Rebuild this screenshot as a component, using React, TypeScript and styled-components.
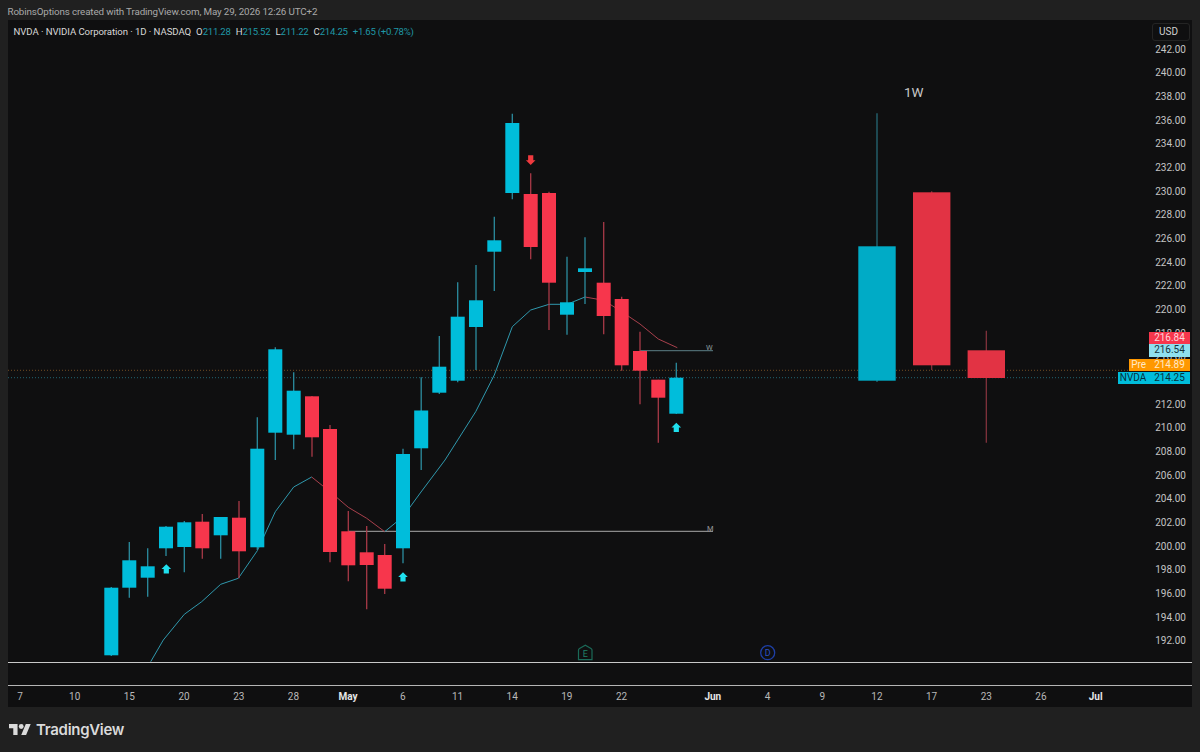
import React from "react"
import styled, { createGlobalStyle } from "styled-components"

const UP = "#00bddb"
const DOWN = "#f7364c"
const FONT = `Roboto, "Liberation Sans", Arial, sans-serif`

const GlobalStyle = createGlobalStyle`
  html, body {
    background: #202020;
    height: 752px;
    margin: 0;
    overflow: hidden;
  }
`
const Page = styled.div`
  display: flex;
  flex-direction: column;
  font-family: ${FONT};
  height: 752px;
  padding: 0 8px;
  width: 1184px;
`
const Caption = styled.div`
  color: #a9a9a9;
  font-size: 9.8px;
  height: 20px;
  letter-spacing: -0.13px;
  line-height: 24px;
  margin-left: -0.5px;
  white-space: nowrap;
`
const Panel = styled.div`
  background: #0f0f10;
  display: flex;
  flex-direction: column;
  height: 687px;
  overflow: hidden;
  position: relative;
`
const Plot = styled.div`
  display: flex;
  height: 642px;
`
const Canvas = styled.svg`
  display: block;
  flex: none;
  height: 642px;
  width: 1142px;
`
const PriceAxis = styled.div`
  box-sizing: border-box;
  color: #c4c4c4;
  font-size: 10px;
  padding: 17.6px 6px 0 0;
  text-align: right;
  width: 42px;
`
const PriceTick = styled.div`
  height: 23.68px;
  line-height: 23.68px;
`
const CurrencyBox = styled.div`
  border: 1px solid #242424;
  border-radius: 3px;
  box-sizing: border-box;
  color: #cfcfcf;
  font-size: 10px;
  height: 18px;
  line-height: 16px;
  padding-left: 6px;
  position: absolute;
  right: 2px;
  top: 3px;
  width: 38px;
`
const Legend = styled.div`
  color: #d8d8d8;
  display: flex;
  font-size: 9.6px;
  left: 5.5px;
  letter-spacing: -0.07px;
  line-height: 12px;
  position: absolute;
  top: 6px;
  white-space: nowrap;
`
const LegendItem = styled.span`
  margin-left: 5px;
`
const LegendValue = styled.span`
  color: #1f97a6;
  letter-spacing: -0.25px;
`
const FrameLabel = styled.div`
  color: #c8c8c8;
  font-size: 13.5px;
  left: 896px;
  position: absolute;
  top: 64px;
`
const TagStack = styled.div`
  display: flex;
  flex-direction: column;
  font-size: 10px;
  position: absolute;
  right: 2px;
  top: 312px;
`
const TagRow = styled.div<{ $gap?: number }>`
  display: flex;
  justify-content: flex-end;
  margin-top: ${({ $gap }) => $gap || 0}px;
`
const Tag = styled.div<{ $bg: string; $fg: string; $width: number }>`
  background: ${({ $bg }) => $bg};
  color: ${({ $fg }) => $fg};
  height: 12.4px;
  line-height: 12.8px;
  margin-left: 0.4px;
  text-align: center;
  width: ${({ $width }) => $width}px;
`
const EventStrip = styled.div`
  border-top: 1.5px solid #c9c9c9;
  box-sizing: border-box;
  height: 25px;
`
const TimeAxis = styled.div`
  border-top: 1.5px solid #b5b5b5;
  box-sizing: border-box;
  color: #b9b9b9;
  display: flex;
  flex: 1;
  font-size: 10px;
  line-height: 21px;
`
const TimeTicks = styled.div`
  display: flex;
  margin-left: -15.35px;
`
const TimeTick = styled.div<{ $major?: boolean; $push?: number }>`
  color: ${({ $major }) => ($major ? "#e6e6e6" : "inherit")};
  flex: none;
  font-weight: ${({ $major }) => ($major ? 700 : 400)};
  margin-left: ${({ $push }) => $push || 0}px;
  text-align: center;
  width: 54.7px;
`
const Footer = styled.div`
  align-items: center;
  color: #dadada;
  display: flex;
  flex: 1;
  font-family: Inter, ${FONT};
  font-size: 15px;
  font-weight: 600;
  gap: 5px;
  letter-spacing: -0.3px;
  padding: 0 0 0 1px;
`
const Logo = styled.svg`
  display: block;
  fill: #dadada;
  height: 17px;
  width: 22px;
`

// x, body top, body bottom, wick top, wick bottom, direction
const candles: [number, number, number, number, number, "u" | "d"][] = [
  [111.3, 587.7, 655.3, 587, 656, "u"],
  [129.3, 560.3, 587.7, 542, 597.7, "u"],
  [147.7, 566.3, 577.7, 548.3, 596.7, "u"],
  [166, 526.7, 548.3, 526, 556, "u"],
  [184.3, 522.3, 547, 521, 572.3, "u"],
  [202.3, 521.7, 548.3, 514, 558.7, "d"],
  [220.7, 517, 535.3, 517, 558.7, "u"],
  [239, 517.7, 551.3, 501, 578.3, "d"],
  [257.3, 448.7, 547.3, 417.3, 550, "u"],
  [275.3, 349.3, 432.7, 347.3, 460, "u"],
  [293.7, 390.7, 434.7, 372.3, 449.3, "u"],
  [312, 396.3, 437.3, 396, 456.7, "d"],
  [330, 429, 552, 425, 562.3, "d"],
  [348.3, 531.3, 565.3, 511, 581.3, "d"],
  [366.7, 552.3, 565, 526, 609.3, "d"],
  [384.7, 555, 588.7, 544, 594, "d"],
  [403, 454, 548.3, 448.7, 563.3, "u"],
  [421.2, 410.5, 448.3, 377.3, 470, "u"],
  [439.3, 366.7, 392.7, 336, 394, "u"],
  [457.7, 316.7, 380.7, 282.3, 382.3, "u"],
  [476, 300.3, 327, 265, 370, "u"],
  [494.3, 240.3, 251.7, 216.7, 291, "u"],
  [512.3, 123, 193, 113.7, 199.3, "u"],
  [530.7, 194, 247, 173.3, 259.3, "d"],
  [549, 193, 282.7, 191.7, 330, "d"],
  [567, 302.3, 314.7, 256.7, 334.7, "u"],
  [585, 268.3, 272, 237.3, 304, "u"],
  [603.7, 282.7, 316, 222, 334.3, "d"],
  [621.7, 299, 365.3, 296.7, 370.7, "d"],
  [640, 351, 370.7, 331.7, 404.3, "d"],
  [658.3, 379.7, 397.7, 379.7, 442.7, "d"],
  [676.3, 377.7, 413.7, 362.7, 414, "u"],
]

const weekly: [number, number, number, number, number, string, string][] = [
  [877, 246.3, 380.7, 113.3, 382, "#00abc6", "#27707f"],
  [931.7, 192.3, 365.3, 191.3, 370, "#e23344", "#8a3540"],
  [986.3, 350.3, 378, 330.7, 442.7, "#e23344", "#8a3540"],
]

const upLine = [
  "150.7,661.7 163.3,640 184.3,614.3 201.7,601.7 220.7,584.3 238.3,578.3 257.3,550.7 275.3,511.7 293.7,487 311.7,477",
  "384.7,531.7 403,516.7 421,492 445,460 475.7,411.7 494.3,375 512.3,326.7 530.7,310 549,304.3 567,304.3 585,297",
]
const downLine = [
  "311.7,477 330,491.7 348.3,507.3 366.7,518.3 384.7,531.7",
  "585,297 603.7,300.3 621.7,311.7 640,324 658.3,339 677.3,347.7",
]

const prices = Array.from({ length: 26 }, (_, i) => (242 - i * 2).toFixed(2))

const timeTicks = [
  { label: "7" },
  { label: "10" },
  { label: "15" },
  { label: "20" },
  { label: "23" },
  { label: "28" },
  { label: "May", major: true },
  { label: "6" },
  { label: "11" },
  { label: "14" },
  { label: "19" },
  { label: "22" },
  { label: "Jun", major: true, push: 36.6 },
  { label: "4" },
  { label: "9" },
  { label: "12" },
  { label: "17" },
  { label: "23" },
  { label: "26" },
  { label: "Jul", major: true },
]

const ArrowUp = ({ x, y }: { x: number; y: number }) => (
  <polygon
    fill="#1fe0ee"
    points={`${x},${y} ${x + 4.8},${y + 4.8} ${x + 2.6},${y + 4.8} ${x + 2.6},${y + 9.3} ${x - 2.6},${y + 9.3} ${x - 2.6},${y + 4.8} ${x - 4.8},${y + 4.8}`}
  />
)

const ArrowDown = ({ x, y }: { x: number; y: number }) => (
  <polygon
    fill="#f03a3f"
    points={`${x},${y} ${x + 4.8},${y - 4.8} ${x + 2.6},${y - 4.8} ${x + 2.6},${y - 9.7} ${x - 2.6},${y - 9.7} ${x - 2.6},${y - 4.8} ${x - 4.8},${y - 4.8}`}
  />
)

const Chart = () => (
  <Canvas viewBox="8 20 1142 642">
    <line x1="8" x2="1150" y1="370.3" y2="370.3" stroke="#8a5c28" strokeWidth="0.8" strokeDasharray="1 2" />
    <line x1="8" x2="1150" y1="377.7" y2="377.7" stroke="#26788a" strokeWidth="0.8" strokeDasharray="1 2" />

    <line x1="348" x2="713" y1="531.3" y2="531.3" stroke="#a9a9a9" strokeWidth="1" />
    <line x1="640" x2="713" y1="350.7" y2="350.7" stroke="#5d7f86" strokeWidth="1" />
    <text x="706" y="350" fill="#8b9a9d" fontSize="7.5" fontFamily={FONT}>W</text>
    <text x="707" y="530.5" fill="#9a9a9a" fontSize="7.5" fontFamily={FONT}>M</text>

    {upLine.map(points => (
      <polyline key={points} points={points} fill="none" stroke="#2f98ad" strokeWidth="1" />
    ))}
    {downLine.map(points => (
      <polyline key={points} points={points} fill="none" stroke="#a8404c" strokeWidth="1" />
    ))}

    {candles.map(([x, top, bottom, high, low, dir]) => (
      <g key={x}>
        <line x1={x} x2={x} y1={high} y2={low} stroke={dir === "u" ? "#2c8da0" : "#a83a48"} strokeWidth="1.3" />
        <rect x={x - 7} y={top} width="14" height={bottom - top} fill={dir === "u" ? UP : DOWN} />
      </g>
    ))}

    <ArrowUp x={166.3} y={564.3} />
    <ArrowUp x={403} y={572.3} />
    <ArrowUp x={676.3} y={422.7} />
    <ArrowDown x={530.7} y={165} />

    {weekly.map(([x, top, bottom, high, low, fill, wick]) => (
      <g key={x}>
        <line x1={x} x2={x} y1={high} y2={low} stroke={wick} strokeWidth="1.2" />
        <rect x={x - 18.7} y={top} width="37.4" height={bottom - top} fill={fill} />
      </g>
    ))}

    <path
      d="M578.5 650 Q578.5 649 579.5 648.4 L585.3 645.2 L591 648.4 Q592 649 592 650 V659.6 H578.5 Z"
      fill="none"
      stroke="#1b6a58"
      strokeWidth="1.2"
    />
    <text x="585.3" y="657" textAnchor="middle" fill="#1f8068" fontSize="9" fontFamily={FONT}>E</text>
    <circle cx="767.7" cy="652.7" r="7" fill="none" stroke="#1e3fa6" strokeWidth="1.3" />
    <text x="767.7" y="656" textAnchor="middle" fill="#2a50c4" fontSize="9" fontFamily={FONT}>D</text>
  </Canvas>
)

const App = () => (
  <Page>
    <GlobalStyle />
    <Caption>RobinsOptions created with TradingView.com, May 29, 2026 12:26 UTC+2</Caption>
    <Panel>
      <Plot>
        <Chart />
        <PriceAxis>
          {prices.map(price => (
            <PriceTick key={price}>{price}</PriceTick>
          ))}
        </PriceAxis>
      </Plot>
      <EventStrip />
      <TimeAxis>
        <TimeTicks>
          {timeTicks.map(({ label, major, push }, i) => (
            <TimeTick key={i} $major={major} $push={push}>
              {label}
            </TimeTick>
          ))}
        </TimeTicks>
      </TimeAxis>

      <Legend>
        NVDA · NVIDIA Corporation · 1D · NASDAQ
        <LegendItem>O<LegendValue>211.28</LegendValue></LegendItem>
        <LegendItem>H<LegendValue>215.52</LegendValue></LegendItem>
        <LegendItem>L<LegendValue>211.22</LegendValue></LegendItem>
        <LegendItem>C<LegendValue>214.25</LegendValue></LegendItem>
        <LegendItem><LegendValue>+1.65 (+0.78%)</LegendValue></LegendItem>
      </Legend>
      <CurrencyBox>USD</CurrencyBox>
      <FrameLabel>1W</FrameLabel>
      <TagStack>
        <TagRow>
          <Tag $bg="#f7364c" $fg="#ffd5da" $width={41}>216.84</Tag>
        </TagRow>
        <TagRow>
          <Tag $bg="#8fe0ee" $fg="#14343c" $width={41}>216.54</Tag>
        </TagRow>
        <TagRow $gap={2}>
          <Tag $bg="#ff9800" $fg="#ffe9c8" $width={20}>Pre</Tag>
          <Tag $bg="#ff9800" $fg="#ffe9c8" $width={41}>214.89</Tag>
        </TagRow>
        <TagRow $gap={0.4}>
          <Tag $bg="#00bddb" $fg="#06303c" $width={31}>NVDA</Tag>
          <Tag $bg="#00bddb" $fg="#06303c" $width={41}>214.25</Tag>
        </TagRow>
      </TagStack>
    </Panel>
    <Footer>
      <Logo viewBox="0 4 36 18">
        <path d="M14 22H7V11H0V4h14v18zM28 22h-8l7.5-18h8L28 22z" />
        <circle cx="20" cy="8" r="4" />
      </Logo>
      TradingView
    </Footer>
  </Page>
)

export default App
